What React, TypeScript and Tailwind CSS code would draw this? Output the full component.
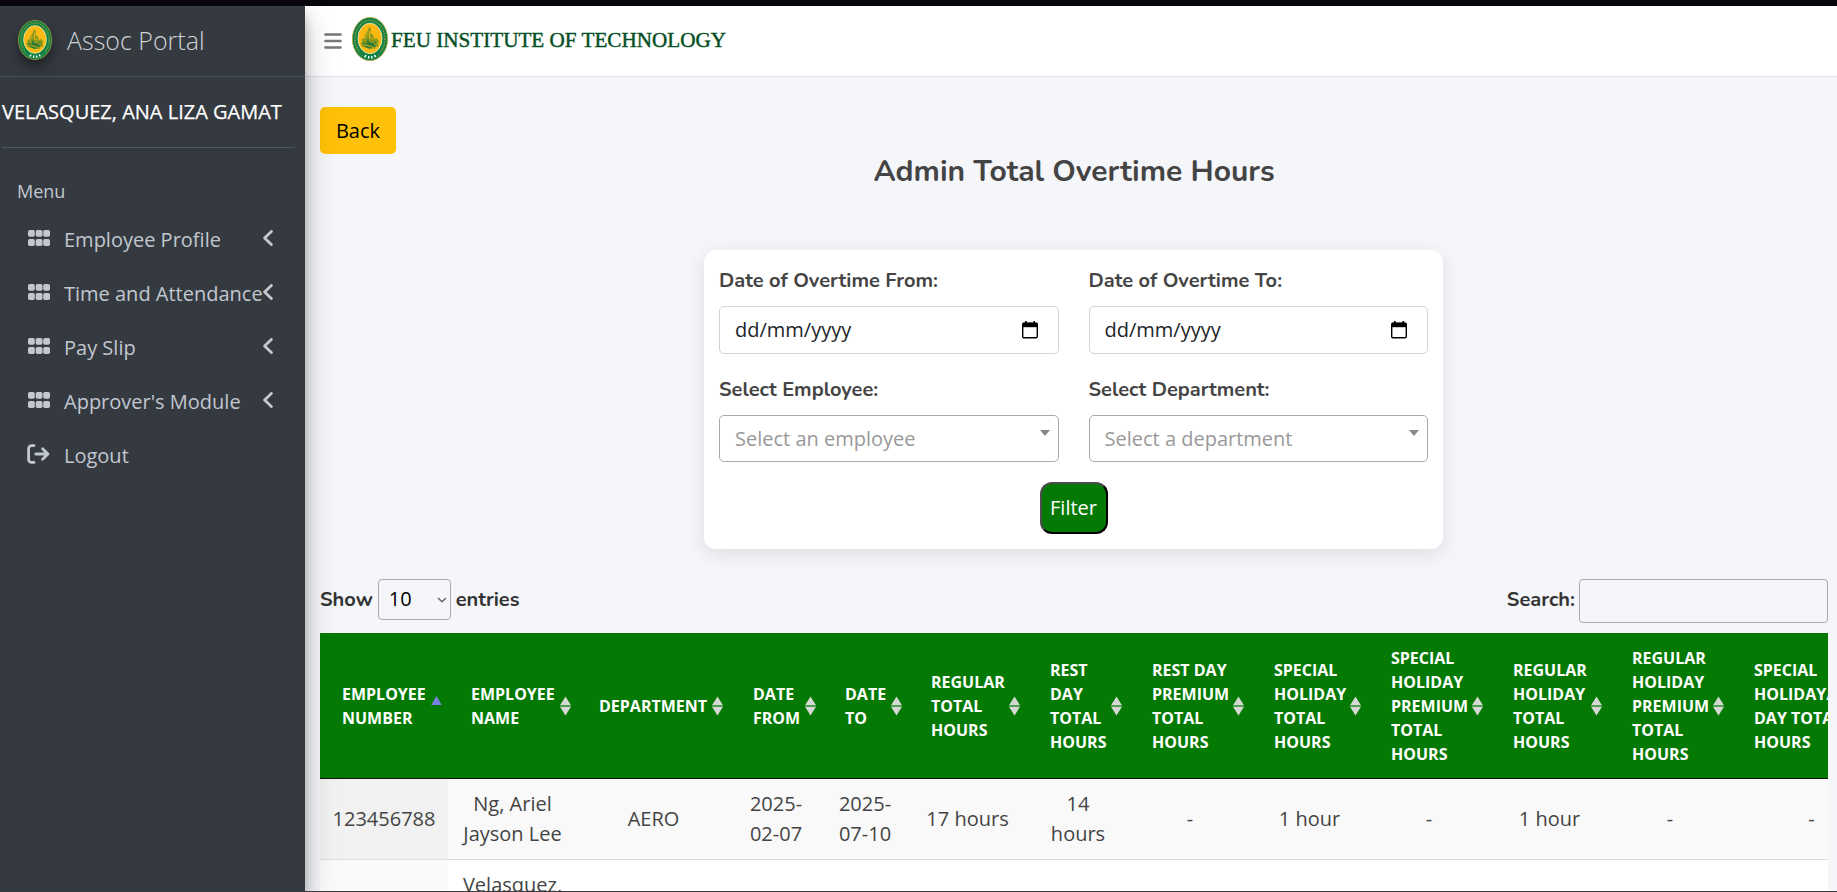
const Shield = ({ className }: { className: string }) => (
  <svg viewBox="0 0 36 44" preserveAspectRatio="none" className={className}>
    <ellipse cx="18" cy="22" rx="17.6" ry="21.6" fill="#0b8048" stroke="#b8a02c" strokeWidth="0.8" />
    <ellipse cx="18" cy="22" rx="14.8" ry="18.6" fill="none" stroke="#8f9c38" strokeWidth="1.8" strokeDasharray="1.2 1.2" />
    <path d="M7 35 Q18 48 29 35 L26 32 Q18 40 10 32Z" fill="#0b8048" />
    <ellipse cx="18" cy="21.4" rx="12" ry="15.2" fill="#fdb913" stroke="#e6e2a0" strokeWidth="1" />
    <path d="M17.4 9.5l1.6 3.5-.6 3 3 2.5.4 3.5 3-1 2 3-1 3 1 2-3 1-1 2-3-1-2 1.5-3-1.5-4-1-2.5-4 2-.6-.6-3 2.4-1.4 1-4 2-2z" fill="#8a9a1e" />
    <path d="M10.5 25l4 1.5L16 21l1 4 3 1 1.5-2 2.5 1.5-1 4-3.5 2-4-.5-3-2z" fill="#2f7a34" />
    <path d="M15 16l-2.5 6M17.5 14v7l3 1M12 27.5l10 3M21 24.5l2.5 3.5" stroke="#fdb913" strokeWidth="0.8" fill="none" />
    <path d="M12.6 38.8l1.3.7M16 40.2l1.3.2M19.2 40.4l1.3-.2M22.4 39.4l1.2-.7" stroke="#fff" strokeWidth="2.6" />
  </svg>
);

const Grid = () => (
  <svg viewBox="0 0 22 16" className="mb-0.5 h-4 w-[22px] shrink-0" fill="currentColor">
    <rect x="0" y="0" width="6.8" height="6.8" rx="1.7" />
    <rect x="7.7" y="0" width="6.8" height="6.8" rx="1.7" />
    <rect x="15.2" y="0" width="6.8" height="6.8" rx="1.7" />
    <rect x="0" y="9.1" width="6.8" height="6.8" rx="1.7" />
    <rect x="7.7" y="9.1" width="6.8" height="6.8" rx="1.7" />
    <rect x="15.2" y="9.1" width="6.8" height="6.8" rx="1.7" />
  </svg>
);

const LogoutIcon = () => (
  <svg viewBox="0 0 23 20" className="mb-0.5 -ml-px h-5 w-[23px] shrink-0" fill="none" stroke="currentColor" strokeWidth="2.8" strokeLinecap="round" strokeLinejoin="round">
    <path d="M7 1.6H4.6A3 3 0 0 0 1.6 4.6v10.8a3 3 0 0 0 3 3H7" />
    <path d="M8.8 10h12M15.6 4.7l5.4 5.3-5.4 5.3" />
  </svg>
);

const Chevron = () => (
  <svg viewBox="0 0 10 16" className="mb-0.5 ml-px h-4 w-2.5 shrink-0" fill="none" stroke="currentColor" strokeWidth="2.8" strokeLinecap="round" strokeLinejoin="round">
    <path d="M8.4 1.4L1.6 8l6.8 6.6" />
  </svg>
);

const Calendar = () => (
  <svg viewBox="0 0 16 18" className="h-[18px] w-4">
    <path d="M3 0h1.6v2H3zM11.4 0H13v2h-1.6z" fill="#000" />
    <rect x="0.7" y="2.2" width="14.6" height="14.6" rx="1.4" fill="none" stroke="#000" strokeWidth="1.4" />
    <path d="M.7 1.7h14.6v4.5H.7z" fill="#000" />
  </svg>
);

const menu = ["Employee Profile", "Time and Attendance", "Pay Slip", "Approver's Module"];

const Sort = ({ active }: { active?: boolean }) =>
  active ? (
    <svg viewBox="0 0 11 20" className="h-5 w-[11px] shrink-0">
      <path d="M5.5 0L10.8 9H.2z" fill="#7b7fe0" />
    </svg>
  ) : (
    <svg viewBox="0 0 11 20" className="h-5 w-[11px] shrink-0">
      <path d="M0 9h11v2H0z" fill="#4fa04f" />
      <path d="M5.5.4L10.8 9H.2zM5.5 19.6L10.8 11H.2z" fill="#d5d8d5" />
    </svg>
  );

type Col = { w: string; pad: string; head: string[]; cell: string[] };
const cols: Col[] = [
  { w: "w-[128px]", pad: "pl-[22px] pr-[6px]", head: ["EMPLOYEE", "NUMBER"], cell: ["123456788"] },
  { w: "w-[129px]", pad: "pl-[23px] pr-[6px]", head: ["EMPLOYEE", "NAME"], cell: ["Ng, Ariel", "Jayson Lee"] },
  { w: "w-[153px]", pad: "pl-[22px] pr-[7px]", head: ["DEPARTMENT"], cell: ["AERO"] },
  { w: "w-[92px]", pad: "pl-[23px] pr-[6px]", head: ["DATE", "FROM"], cell: ["2025-", "02-07"] },
  { w: "w-[86px]", pad: "pl-[23px] pr-[6px]", head: ["DATE", "TO"], cell: ["2025-", "07-10"] },
  { w: "w-[119px]", pad: "pl-[23px] pr-[7px]", head: ["REGULAR", "TOTAL", "HOURS"], cell: ["17 hours"] },
  { w: "w-[102px]", pad: "pl-[23px] pr-[7px]", head: ["REST", "DAY", "TOTAL", "HOURS"], cell: ["14", "hours"] },
  { w: "w-[122px]", pad: "pl-[23px] pr-[7px]", head: ["REST DAY", "PREMIUM", "TOTAL", "HOURS"], cell: ["-"] },
  { w: "w-[117px]", pad: "pl-[23px] pr-[7px]", head: ["SPECIAL", "HOLIDAY", "TOTAL", "HOURS"], cell: ["1 hour"] },
  { w: "w-[122px]", pad: "pl-[23px] pr-[7px]", head: ["SPECIAL", "HOLIDAY", "PREMIUM", "TOTAL", "HOURS"], cell: ["-"] },
  { w: "w-[119px]", pad: "pl-[23px] pr-[7px]", head: ["REGULAR", "HOLIDAY", "TOTAL", "HOURS"], cell: ["1 hour"] },
  { w: "w-[122px]", pad: "pl-[23px] pr-[7px]", head: ["REGULAR", "HOLIDAY", "PREMIUM", "TOTAL", "HOURS"], cell: ["-"] },
  { w: "w-[161px]", pad: "pl-[23px] pr-[6px]", head: ["SPECIAL", "HOLIDAY/REST", "DAY TOTAL", "HOURS"], cell: ["-"] },
];

const Label = ({ children }: { children: string }) => (
  <div className="h-[29px] pt-px font-['Nunito','Lato',sans-serif] text-[20px] leading-[30px] font-bold whitespace-nowrap text-[#444]">{children}</div>
);

const DateField = () => (
  <div className="mt-3 flex h-12 items-center justify-between rounded-[5px] border border-[#ced4da] pr-5 pl-[15px] text-[20px] text-[#212529]">
    <span>dd/mm/yyyy</span>
    <Calendar />
  </div>
);

const SelectField = ({ text }: { text: string }) => (
  <div className="mt-3 flex h-[47px] items-center justify-between rounded-[5px] border border-[#aaa] pr-2 pl-[15px] text-[20px] text-[#999]">
    <span>{text}</span>
    <svg viewBox="0 0 10 6" className="mb-[11px] h-1.5 w-2.5">
      <path d="M0 0h10L5 6z" fill="#888" />
    </svg>
  </div>
);

export default function App() {
  return (
    <div className="flex h-[892px] w-[1837px] flex-col overflow-hidden border-b border-[#3c3c3e] bg-[#f4f6f9] font-['Open_Sans','Noto_Sans',sans-serif]">
      <div className="h-1.5 shrink-0 bg-[#09060d]" />
      <div className="flex min-h-0 flex-1">
        <aside className="z-10 flex w-[305px] shrink-0 flex-col bg-[#343a40] text-[#c2c7d0] shadow-[0_14px_28px_rgba(0,0,0,0.25),0_10px_10px_rgba(0,0,0,0.22)]">
          <div className="flex h-[71px] items-center border-b border-[#4b545c] pl-[18px]">
            <Shield className="mb-0.5 h-10 w-[34px] rounded-full shadow-[0_10px_20px_rgba(0,0,0,0.19),0_6px_6px_rgba(0,0,0,0.23)]" />
            <span className="ml-[15px] text-[25px] font-light whitespace-nowrap text-[#d0d2d4]">Assoc Portal</span>
          </div>
          <div className="mr-2.5 ml-0.5 flex h-[71px] items-center border-b border-[#4f5962]">
            <span className="text-[20px] whitespace-nowrap text-white [-webkit-text-stroke:0.25px_white]">VELASQUEZ, ANA LIZA GAMAT</span>
          </div>
          <div className="mt-[28px] h-[30px] pl-[17px] text-[18px] leading-[30px]">Menu</div>
          <nav className="mt-[6px] flex flex-col">
            {menu.map((m) => (
              <div key={m} className="flex h-[54px] items-center pl-7 text-[20px]">
                <Grid />
                <span className="ml-[14px] w-[198px] pt-0.5 whitespace-nowrap">{m}</span>
                <Chevron />
              </div>
            ))}
            <div className="flex h-[54px] items-center pl-7 text-[20px]">
              <LogoutIcon />
              <span className="ml-[14px] pt-0.5">Logout</span>
            </div>
          </nav>
        </aside>
        <main className="flex min-w-0 flex-1 flex-col">
          <header className="flex h-[71px] shrink-0 items-center border-b border-[#dee2e6] bg-white pl-[19px]">
            <svg viewBox="0 0 18 16" className="h-4 w-[18px]" stroke="#777" strokeWidth="2.4" strokeLinecap="round">
              <path d="M1.4 1.5h15.2M1.4 8h15.2M1.4 14.5h15.2" />
            </svg>
            <Shield className="mb-1 ml-[10px] h-11 w-9" />
            <svg viewBox="0 0 340 30" className="ml-0.5 h-[30px] w-[340px]">
              <text x="1" y="21" textLength="335" lengthAdjust="spacingAndGlyphs" className="font-['Liberation_Serif',serif] text-[21.5px]" fill="#064f24" stroke="#064f24" strokeWidth="0.45">FEU INSTITUTE OF TECHNOLOGY</text>
            </svg>
          </header>
          <div className="flex min-h-0 flex-1 flex-col pr-[9px] pl-[15px]">
            <button className="mt-[30px] flex h-[47px] w-[76px] shrink-0 items-center justify-center rounded-[5px] bg-[#ffc107] text-[20px] text-black">Back</button>
            <h1 className="h-[36px] shrink-0 text-center font-['Nunito','Lato',sans-serif] text-[30px] leading-[36px] font-bold text-[#444]">Admin Total Overtime Hours</h1>
            <section className="mt-[60px] ml-[384px] flex h-[299px] w-[739px] shrink-0 flex-col items-center rounded-xl bg-white px-[15px] pt-[15px] shadow-[0_5px_20px_rgba(0,0,0,0.1)]">
              <div className="grid w-full grid-cols-2 gap-x-[30px] gap-y-5">
                <div><Label>Date of Overtime From:</Label><DateField /></div>
                <div><Label>Date of Overtime To:</Label><DateField /></div>
                <div><Label>Select Employee:</Label><SelectField text="Select an employee" /></div>
                <div><Label>Select Department:</Label><SelectField text="Select a department" /></div>
              </div>
              <button className="mt-5 h-[52px] w-[68px] rounded-xl border-2 border-t-[#4c4c4c] border-r-black border-b-black border-l-[#4c4c4c] bg-[#047a04] text-[20px] text-white">Filter</button>
            </section>
            <div className="mt-[30px] flex shrink-0 items-start justify-between font-['Nunito','Lato',sans-serif] text-[20px] font-bold text-[#333]">
              <div className="flex h-[41px] items-center gap-[5px]">
                <span>Show</span>
                <div className="flex h-[41px] w-[73px] items-center justify-between rounded-[4px] border border-[#aaa] pr-[3px] pl-[10px] font-['Open_Sans',sans-serif] font-normal text-black">
                  <span className="mb-px">10</span>
                  <svg viewBox="0 0 10 6" className="h-1.5 w-2.5" fill="none" stroke="#666" strokeWidth="1.5"><path d="M1 1l4 3.8L9 1" /></svg>
                </div>
                <span>entries</span>
              </div>
              <div className="flex h-11 items-center gap-1">
                <span className="mb-0.5">Search:</span>
                <div className="h-11 w-[249px] rounded-[4px] border border-[#aaa]" />
              </div>
            </div>
            <div className="mt-[10px] flex min-h-0 flex-1 flex-col overflow-hidden bg-white">
              <div className="flex h-[146px] w-max shrink-0 border-b border-[#111] bg-[#047a04]">
                {cols.map((c, i) => (
                  <div key={i} className={`flex shrink-0 items-center justify-between ${c.w} ${c.pad}`}>
                    <div className="text-[16px] leading-6 font-bold whitespace-nowrap text-white">
                      {c.head.map((h) => <div key={h}>{h}</div>)}
                    </div>
                    <Sort active={i === 0} />
                  </div>
                ))}
              </div>
              <div className="flex h-[81px] w-max shrink-0 border-b border-[#ddd] bg-[#f9f9f9]">
                {cols.map((c, i) => (
                  <div key={i} className={`flex shrink-0 flex-col justify-center text-center text-[20px] leading-[30px] text-[#444] ${c.w} ${i === 0 ? "bg-[#f1f1f1]" : ""}`}>
                    {c.cell.map((t) => <div key={t} className="whitespace-nowrap">{t}</div>)}
                  </div>
                ))}
              </div>
              <div className="flex w-max shrink-0">
                <div className="h-[81px] w-[128px] bg-[#fafafa]" />
                <div className="h-[81px] w-[129px] pt-[10px] text-center text-[20px] leading-[30px] text-[#444]">Velasquez,</div>
              </div>
            </div>
          </div>
        </main>
      </div>
    </div>
  );
}
